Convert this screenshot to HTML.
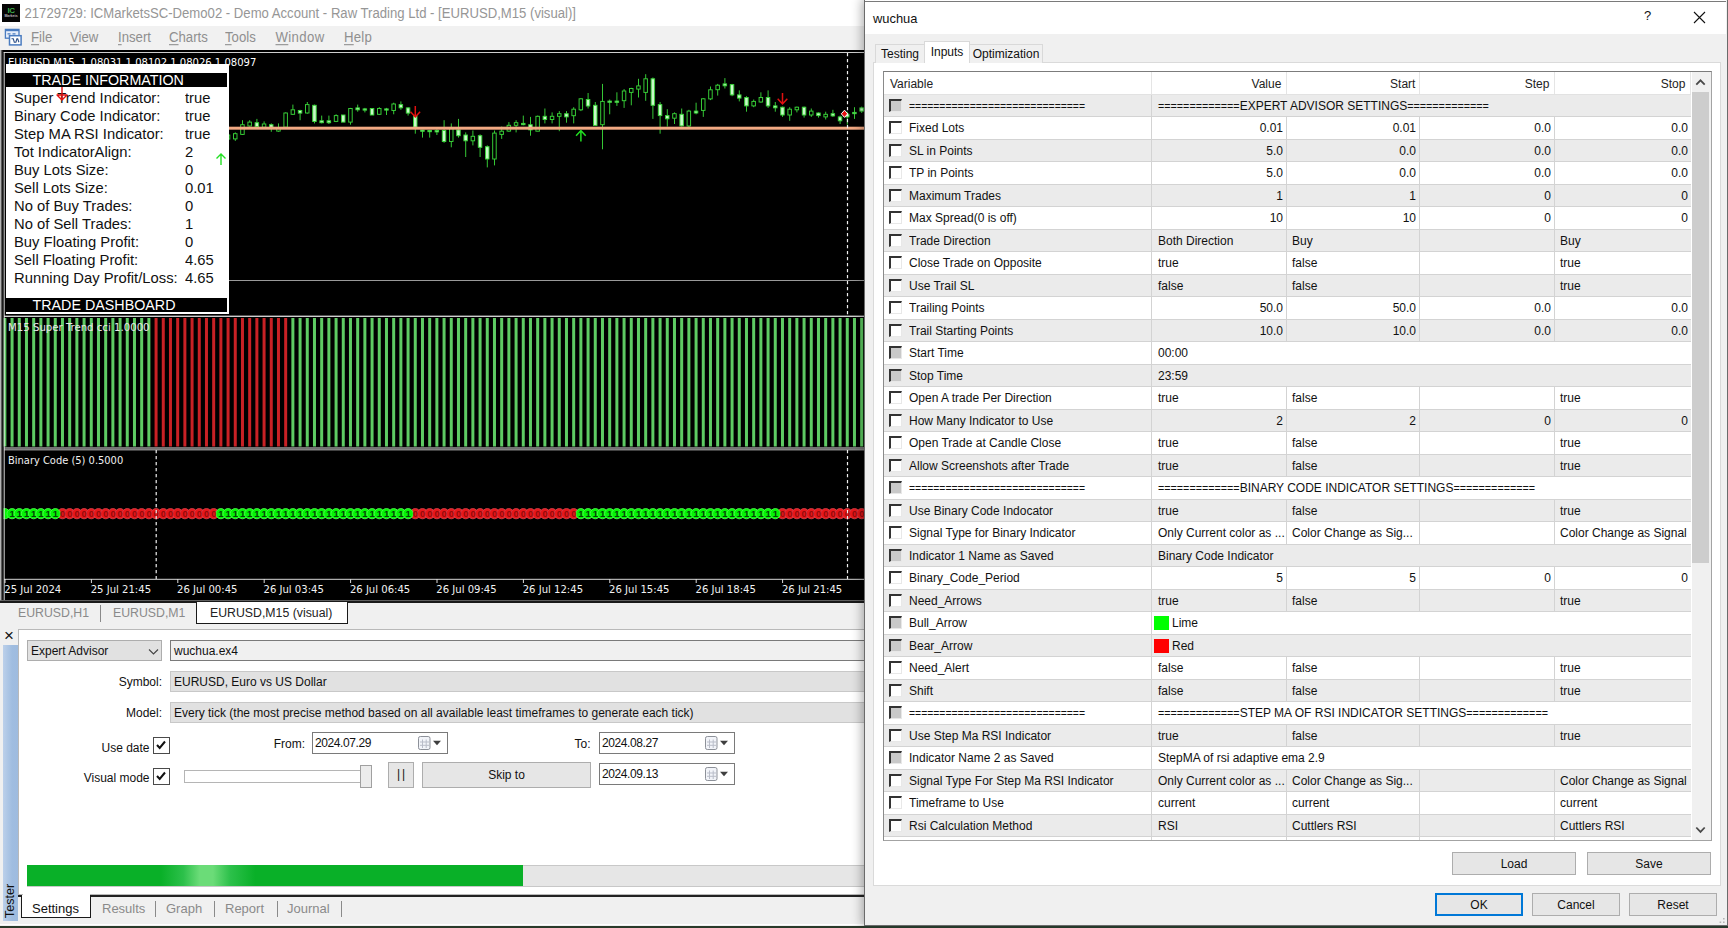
<!DOCTYPE html>
<html lang="en">
<head>
<meta charset="utf-8">
<title>wuchua - Strategy Tester</title>
<style>
*{box-sizing:border-box;margin:0;padding:0}
html,body{width:1728px;height:928px;overflow:hidden;background:#f0f0f0;font-family:"Liberation Sans",Arial,sans-serif;font-size:12px;color:#000}
.abs{position:absolute}
#main{position:absolute;left:0;top:0;width:866px;height:928px;background:#f0f0f0;overflow:hidden}
#titlebar{position:absolute;left:0;top:0;width:866px;height:26px;background:#fff}
#titlebar .logo{position:absolute;left:2px;top:3.500px;width:18px;height:18px;background:#050505;}
#titlebar .logo span{position:absolute;left:3px;top:3px;width:12px;text-align:center;font-size:8px;font-weight:bold;color:#3fae4a;letter-spacing:-0.5px;line-height:8px}
#titlebar .logo em{position:absolute;left:2px;top:10.500px;width:14px;text-align:center;font-style:normal;font-size:3.5px;line-height:4px;color:#bbb;font-weight:bold}
#titlebar .t{position:absolute;left:24.500px;top:4.700px;font-size:13.13px;line-height:17px;color:#969696;white-space:nowrap;transform:scaleY(1.1);transform-origin:0 78%}
#menubar{position:absolute;left:0;top:26px;width:866px;height:24px;background:#f1f1f1}
#menubar span{position:absolute;top:3px;font-size:13.2px;line-height:17px;color:#8f8f8f;white-space:nowrap;transform:scaleY(1.08);transform-origin:0 78%}
#menubar span u{text-decoration:underline;text-underline-offset:2px}
#chart{position:absolute;left:0;top:50px;width:866px;height:552px;background:#000}
#chart svg{position:absolute;left:0;top:-50px}
.clab{font-family:"DejaVu Sans Condensed","DejaVu Sans",sans-serif}
#info{position:absolute;left:6px;top:64px;width:223px;height:250px;background:#fff;overflow:hidden}
#info .hd{position:absolute;left:0;width:223px;height:14px;background:#000;color:#fff;font-size:14.3px;line-height:14px;padding-left:26.500px;white-space:nowrap;border-right:2px solid #fff}
#info .il,#info .iv{position:absolute;font-size:14.8px;line-height:18px;white-space:nowrap;color:#111;transform:scaleY(.93);transform-origin:0 75%}
#info .il{left:8px}
#info .iv{left:179px}
#ctabs{position:absolute;left:0;top:602px;width:866px;height:24px;background:#f0f0f0;font-size:12.3px}
#ctabs span{position:absolute;top:3px;line-height:17px;color:#8a8a8a;white-space:nowrap;transform:scaleY(1.1);transform-origin:0 70%}
#tester{position:absolute;left:0;top:626px;width:866px;height:302px;background:#f0f0f0}
#tpanel{position:absolute;left:18px;top:3px;width:860px;height:266px;background:#fff;border:1px solid #b9b9b9}
.lbl{position:absolute;white-space:nowrap;font-size:12px;line-height:15px;color:#111}
.box{position:absolute;border:1px solid #adadad;background:#e3e3e3;font-size:12px;line-height:20.500px;padding-left:3px;white-space:nowrap;color:#111;overflow:hidden}
.chk{position:absolute;width:16.500px;height:16.500px;border:1px solid #4a4a4a;background:#fff}
.btn{position:absolute;border:1px solid #adadad;background:#e6e6e6;text-align:center;font-size:12px;color:#111;white-space:nowrap}
#btabs{position:absolute;left:0;top:269px;width:866px;height:33px}
#btabs span{position:absolute;top:5px;font-size:13px;line-height:17px;color:#8a8a8a;white-space:nowrap}
/* dialog */
#dlg{position:absolute;left:864px;top:-1px;width:864px;height:927px;background:#f0f0f0;border:1px solid #6b6b6b;border-top-color:#8a8a8a;box-shadow:-2px 0 10px rgba(0,0,0,.32)}
#dtitle{position:absolute;left:0;top:0;width:861px;height:34px;background:#fff}
#dtitle .t{position:absolute;left:8px;top:10.500px;font-size:12.9px;line-height:16px;color:#111}
#pane{position:absolute;left:8px;top:62px;width:847.500px;height:824px;background:#fff;border:1px solid #dadada}
.dtab{position:absolute;border:1px solid #d9d9d9;border-bottom:none;background:#f0f0f0;font-size:12px;line-height:15px;text-align:center;white-space:nowrap;color:#111}
#list{position:absolute;left:18px;top:71px;width:829px;height:770px;border:1px solid;border-color:#7c7c7c #a3a3a3 #a3a3a3 #8a8a8a;background:#fff;overflow:hidden}
#lhead{position:absolute;left:0;top:0;width:807px;height:22.5px;background:#fff;border-bottom:1px solid #e2e2e2}
#lhead span{position:absolute;top:5px;font-size:12px;line-height:15px;color:#222;white-space:nowrap}
#lhead i{position:absolute;top:0;width:1px;height:22px;background:#e5e5e5}
#lbody{position:absolute;left:0;top:22.5px;width:807px}
.r{position:relative;height:22.5px;width:807px;border-bottom:1px solid #d3d3d3;font-size:12px;line-height:23.500px;white-space:nowrap;color:#111}
.r.g{background:#ebebeb}
.r span{position:absolute;top:0;height:21.5px;overflow:hidden}
.r b{font-weight:normal}
.r .c0{left:25px;width:240px}
.r .c1{left:267px;width:135px;border-left:1px solid #d3d3d3;padding-left:6px}
.r .c2{left:402px;width:133px;border-left:1px solid #d3d3d3;padding-left:5px}
.r .c3{left:535px;width:135px;border-left:1px solid #d3d3d3;padding-left:5px}
.r .c4{left:670px;width:137px;border-left:1px solid #d3d3d3;padding-left:5px}
.r .n{text-align:right;padding-right:3px;padding-left:0}
.q{font-size:10.4px}
.q2{font-size:10.75px}
.r .cs{left:267px;width:540px;border-left:1px solid #d3d3d3;padding-left:6px}
.cb{position:absolute;left:5px;top:4px;width:13px;height:13px;background:#fff;border-top:2px solid #333;border-left:2px solid #333;border-right:1px solid #e8e8e8;border-bottom:1px solid #e8e8e8}
.cb.dis{background:#c9c9c9}
.sw{display:inline-block;width:15px;height:14px;vertical-align:-3px;margin-right:3px;margin-left:-4px}
</style>
</head>
<body>
<div id="main">
  <div id="titlebar">
    <div class="logo"><span>IC</span><em>Markets</em></div>
    <div class="t">21729729: ICMarketsSC-Demo02 - Demo Account - Raw Trading Ltd - [EURUSD,M15 (visual)]</div>
  </div>
  <div id="menubar">
    <svg class="abs" style="left:4px;top:1px" width="20" height="20" viewBox="0 0 20 20"><rect x="1.4" y="2.4" width="13.6" height="8.8" fill="#e6eefa" stroke="#4a7cc0" stroke-width="1.3"/><rect x="1.4" y="2" width="13.6" height="2.200" fill="#4a7cc0"/><path d="M3.500 6.800 h3 M8.500 6.800 h3" stroke="#4a7cc0" stroke-width="1.200"/><rect x="5.500" y="8.700" width="11.600" height="9.200" fill="#fff" stroke="#4a7cc0" stroke-width="1.500"/><path d="M7.500 11.800 h1.800 l1 3.400 h1.600 l1 -3.400 h0.800 l1.200 3.400" stroke="#2d4f86" stroke-width="1.100" fill="none"/></svg>
    <span style="left:31px"><u>F</u>ile</span>
    <span style="left:70px"><u>V</u>iew</span>
    <span style="left:118px"><u>I</u>nsert</span>
    <span style="left:169px"><u>C</u>harts</span>
    <span style="left:225px"><u>T</u>ools</span>
    <span style="left:275.500px;letter-spacing:.35px"><u>W</u>indow</span>
    <span style="left:344px;letter-spacing:.2px"><u>H</u>elp</span>
  </div>
  <div id="chart">
    <svg width="866" height="602" viewBox="0 0 866 602" shape-rendering="auto">
      <!-- frame -->
      <!-- price chart title -->
      <text class="clab" x="8" y="66" font-size="11.15" fill="#fff">EURUSD,M15&#160;&#160;1.08031 1.08102 1.08026 1.08097</text>
      <!-- horizontal grey line -->
      <rect x="229" y="280" width="637" height="1" fill="#9a9a9a"/>
      <!-- candles -->
      <g stroke="#38d238" stroke-width="0.95">
<line x1="228.1" y1="133.1" x2="228.1" y2="140.9"/>
<rect x="226.3" y="135.0" width="3.5" height="4.1" fill="#000"/>
<line x1="235.3" y1="132.4" x2="235.3" y2="140.9"/>
<rect x="233.5" y="133.7" width="3.5" height="5.2" fill="#000"/>
<line x1="242.5" y1="120.2" x2="242.5" y2="135.0"/>
<rect x="240.7" y="124.7" width="3.5" height="9.7" fill="#000"/>
<line x1="249.7" y1="120.2" x2="249.7" y2="126.6"/>
<rect x="247.9" y="122.1" width="3.5" height="3.9" fill="#000"/>
<line x1="256.9" y1="118.9" x2="256.9" y2="127.3"/>
<rect x="255.1" y="122.7" width="3.5" height="3.9" fill="#c8f9c8"/>
<line x1="264.1" y1="121.4" x2="264.1" y2="127.3"/>
<rect x="262.3" y="124.0" width="3.5" height="3.2" fill="#000"/>
<line x1="271.3" y1="123.4" x2="271.3" y2="131.8"/>
<rect x="269.5" y="124.7" width="3.5" height="2.6" fill="#c8f9c8"/>
<line x1="278.5" y1="123.4" x2="278.5" y2="131.8"/>
<rect x="276.7" y="127.9" width="3.5" height="3.2" fill="#000"/>
<line x1="285.7" y1="112.4" x2="285.7" y2="127.3"/>
<rect x="283.9" y="113.0" width="3.5" height="14.2" fill="#000"/>
<line x1="292.9" y1="104.6" x2="292.9" y2="115.0"/>
<rect x="291.1" y="109.8" width="3.5" height="4.5" fill="#000"/>
<line x1="300.1" y1="109.8" x2="300.1" y2="120.2"/>
<rect x="298.3" y="110.5" width="3.5" height="2.6" fill="#c8f9c8"/>
<line x1="307.3" y1="102.0" x2="307.3" y2="113.7"/>
<rect x="305.5" y="104.6" width="3.5" height="8.4" fill="#000"/>
<line x1="314.5" y1="104.6" x2="314.5" y2="123.4"/>
<rect x="312.7" y="105.3" width="3.5" height="16.2" fill="#c8f9c8"/>
<line x1="321.7" y1="115.6" x2="321.7" y2="123.4"/>
<rect x="319.9" y="120.8" width="3.5" height="1.9" fill="#c8f9c8"/>
<line x1="328.9" y1="115.6" x2="328.9" y2="124.0"/>
<rect x="327.1" y="120.8" width="3.5" height="1.9" fill="#c8f9c8"/>
<line x1="336.1" y1="114.3" x2="336.1" y2="122.1"/>
<rect x="334.3" y="115.6" width="3.5" height="5.8" fill="#000"/>
<line x1="343.3" y1="115.0" x2="343.3" y2="122.1"/>
<rect x="341.5" y="115.0" width="3.5" height="7.1" fill="#c8f9c8"/>
<line x1="350.5" y1="107.9" x2="350.5" y2="124.7"/>
<rect x="348.7" y="108.5" width="3.5" height="13.6" fill="#000"/>
<line x1="357.7" y1="104.6" x2="357.7" y2="111.7"/>
<rect x="355.9" y="107.9" width="3.5" height="1.9" fill="#c8f9c8"/>
<line x1="364.9" y1="107.9" x2="364.9" y2="112.4"/>
<rect x="363.1" y="108.9" width="3.5" height="1.2" fill="#c8f9c8"/>
<line x1="372.1" y1="108.5" x2="372.1" y2="115.0"/>
<rect x="370.3" y="108.5" width="3.5" height="6.5" fill="#c8f9c8"/>
<line x1="379.3" y1="107.2" x2="379.3" y2="115.0"/>
<rect x="377.5" y="108.5" width="3.5" height="5.8" fill="#000"/>
<line x1="386.5" y1="107.9" x2="386.5" y2="115.0"/>
<rect x="384.7" y="108.9" width="3.5" height="1.2" fill="#c8f9c8"/>
<line x1="393.7" y1="102.7" x2="393.7" y2="114.3"/>
<rect x="391.9" y="104.0" width="3.5" height="6.5" fill="#000"/>
<line x1="400.9" y1="101.4" x2="400.9" y2="109.8"/>
<rect x="399.1" y="104.6" width="3.5" height="3.2" fill="#c8f9c8"/>
<line x1="408.1" y1="107.2" x2="408.1" y2="115.6"/>
<rect x="406.3" y="107.9" width="3.5" height="5.2" fill="#c8f9c8"/>
<line x1="415.3" y1="114.3" x2="415.3" y2="133.7"/>
<rect x="413.5" y="115.6" width="3.5" height="11.6" fill="#c8f9c8"/>
<line x1="422.5" y1="129.9" x2="422.5" y2="137.6"/>
<rect x="420.7" y="130.1" width="3.5" height="1.2" fill="#c8f9c8"/>
<line x1="429.7" y1="129.9" x2="429.7" y2="137.6"/>
<rect x="427.9" y="130.5" width="3.5" height="1.2" fill="#c8f9c8"/>
<line x1="436.9" y1="129.2" x2="436.9" y2="135.0"/>
<rect x="435.1" y="130.5" width="3.5" height="1.4" fill="#c8f9c8"/>
<line x1="444.1" y1="120.2" x2="444.1" y2="142.8"/>
<rect x="442.3" y="130.5" width="3.5" height="11.0" fill="#c8f9c8"/>
<line x1="451.3" y1="123.4" x2="451.3" y2="147.3"/>
<rect x="449.5" y="128.6" width="3.5" height="12.9" fill="#000"/>
<line x1="458.5" y1="118.9" x2="458.5" y2="137.6"/>
<rect x="456.7" y="129.9" width="3.5" height="5.8" fill="#c8f9c8"/>
<line x1="465.7" y1="132.4" x2="465.7" y2="157.0"/>
<rect x="463.9" y="135.0" width="3.5" height="5.8" fill="#c8f9c8"/>
<line x1="472.9" y1="130.5" x2="472.9" y2="145.4"/>
<rect x="471.1" y="136.3" width="3.5" height="4.5" fill="#000"/>
<line x1="480.1" y1="134.4" x2="480.1" y2="157.0"/>
<rect x="478.3" y="135.7" width="3.5" height="11.6" fill="#c8f9c8"/>
<line x1="487.3" y1="145.4" x2="487.3" y2="167.4"/>
<rect x="485.5" y="146.7" width="3.5" height="12.3" fill="#c8f9c8"/>
<line x1="494.5" y1="130.5" x2="494.5" y2="165.4"/>
<rect x="492.7" y="133.1" width="3.5" height="25.9" fill="#000"/>
<line x1="501.7" y1="126.6" x2="501.7" y2="138.9"/>
<rect x="499.9" y="131.2" width="3.5" height="3.2" fill="#000"/>
<line x1="508.9" y1="122.1" x2="508.9" y2="131.8"/>
<rect x="507.1" y="125.3" width="3.5" height="5.8" fill="#000"/>
<line x1="516.1" y1="120.2" x2="516.1" y2="132.4"/>
<rect x="514.3" y="122.7" width="3.5" height="2.6" fill="#000"/>
<line x1="523.3" y1="115.6" x2="523.3" y2="125.3"/>
<rect x="521.5" y="123.4" width="3.5" height="1.3" fill="#c8f9c8"/>
<line x1="530.5" y1="116.9" x2="530.5" y2="135.7"/>
<rect x="528.7" y="124.7" width="3.5" height="5.2" fill="#c8f9c8"/>
<line x1="537.7" y1="115.6" x2="537.7" y2="131.2"/>
<rect x="535.9" y="116.3" width="3.5" height="14.9" fill="#000"/>
<line x1="544.9" y1="108.5" x2="544.9" y2="123.4"/>
<rect x="543.1" y="116.3" width="3.5" height="3.2" fill="#c8f9c8"/>
<line x1="552.1" y1="112.4" x2="552.1" y2="123.4"/>
<rect x="550.3" y="116.3" width="3.5" height="3.2" fill="#000"/>
<line x1="559.3" y1="111.1" x2="559.3" y2="131.2"/>
<rect x="557.5" y="113.7" width="3.5" height="2.6" fill="#000"/>
<line x1="566.5" y1="111.1" x2="566.5" y2="122.7"/>
<rect x="564.7" y="113.7" width="3.5" height="3.2" fill="#c8f9c8"/>
<line x1="573.7" y1="107.2" x2="573.7" y2="123.4"/>
<rect x="571.9" y="109.2" width="3.5" height="6.5" fill="#000"/>
<line x1="580.9" y1="98.2" x2="580.9" y2="111.1"/>
<rect x="579.1" y="98.8" width="3.5" height="11.0" fill="#000"/>
<line x1="588.1" y1="93.0" x2="588.1" y2="108.5"/>
<rect x="586.3" y="99.5" width="3.5" height="6.5" fill="#c8f9c8"/>
<line x1="595.3" y1="102.0" x2="595.3" y2="125.3"/>
<rect x="593.5" y="105.3" width="3.5" height="20.1" fill="#c8f9c8"/>
<line x1="602.5" y1="83.9" x2="602.5" y2="149.3"/>
<rect x="600.7" y="101.4" width="3.5" height="23.3" fill="#000"/>
<line x1="609.7" y1="99.5" x2="609.7" y2="114.3"/>
<rect x="607.9" y="101.1" width="3.5" height="1.2" fill="#c8f9c8"/>
<line x1="616.9" y1="92.3" x2="616.9" y2="105.9"/>
<rect x="615.1" y="101.1" width="3.5" height="1.2" fill="#c8f9c8"/>
<line x1="624.1" y1="89.1" x2="624.1" y2="107.9"/>
<rect x="622.3" y="91.0" width="3.5" height="9.7" fill="#000"/>
<line x1="631.3" y1="87.8" x2="631.3" y2="105.3"/>
<rect x="629.5" y="88.5" width="3.5" height="3.9" fill="#000"/>
<line x1="638.5" y1="78.8" x2="638.5" y2="97.5"/>
<rect x="636.7" y="85.9" width="3.5" height="3.2" fill="#000"/>
<line x1="645.7" y1="74.2" x2="645.7" y2="100.8"/>
<rect x="643.9" y="78.8" width="3.5" height="13.6" fill="#000"/>
<line x1="652.9" y1="77.5" x2="652.9" y2="118.9"/>
<rect x="651.1" y="78.8" width="3.5" height="26.5" fill="#c8f9c8"/>
<line x1="660.1" y1="102.0" x2="660.1" y2="133.7"/>
<rect x="658.3" y="104.6" width="3.5" height="11.0" fill="#c8f9c8"/>
<line x1="667.3" y1="109.2" x2="667.3" y2="126.6"/>
<rect x="665.5" y="115.6" width="3.5" height="3.2" fill="#c8f9c8"/>
<line x1="674.5" y1="112.4" x2="674.5" y2="124.0"/>
<rect x="672.7" y="113.7" width="3.5" height="4.5" fill="#000"/>
<line x1="681.7" y1="108.5" x2="681.7" y2="126.6"/>
<rect x="679.9" y="114.3" width="3.5" height="11.6" fill="#c8f9c8"/>
<line x1="688.9" y1="109.8" x2="688.9" y2="128.6"/>
<rect x="687.1" y="111.1" width="3.5" height="14.9" fill="#000"/>
<line x1="696.1" y1="102.7" x2="696.1" y2="114.3"/>
<rect x="694.3" y="111.1" width="3.5" height="1.9" fill="#c8f9c8"/>
<line x1="703.3" y1="98.2" x2="703.3" y2="116.9"/>
<rect x="701.5" y="98.8" width="3.5" height="11.6" fill="#000"/>
<line x1="710.5" y1="86.5" x2="710.5" y2="100.1"/>
<rect x="708.7" y="89.8" width="3.5" height="9.1" fill="#000"/>
<line x1="717.7" y1="83.9" x2="717.7" y2="95.6"/>
<rect x="715.9" y="85.2" width="3.5" height="4.5" fill="#000"/>
<line x1="724.9" y1="78.1" x2="724.9" y2="88.5"/>
<rect x="723.1" y="83.9" width="3.5" height="1.9" fill="#c8f9c8"/>
<line x1="732.1" y1="83.9" x2="732.1" y2="96.2"/>
<rect x="730.3" y="84.6" width="3.5" height="10.3" fill="#c8f9c8"/>
<line x1="739.3" y1="90.4" x2="739.3" y2="101.4"/>
<rect x="737.5" y="94.9" width="3.5" height="3.2" fill="#c8f9c8"/>
<line x1="746.5" y1="96.2" x2="746.5" y2="111.7"/>
<rect x="744.7" y="97.5" width="3.5" height="8.4" fill="#c8f9c8"/>
<line x1="753.7" y1="99.5" x2="753.7" y2="107.2"/>
<rect x="751.9" y="101.4" width="3.5" height="4.5" fill="#000"/>
<line x1="760.9" y1="92.3" x2="760.9" y2="102.7"/>
<rect x="759.1" y="97.5" width="3.5" height="4.5" fill="#000"/>
<line x1="768.1" y1="90.4" x2="768.1" y2="107.9"/>
<rect x="766.3" y="97.5" width="3.5" height="8.4" fill="#c8f9c8"/>
<line x1="775.3" y1="102.0" x2="775.3" y2="111.7"/>
<rect x="773.5" y="105.9" width="3.5" height="1.9" fill="#c8f9c8"/>
<line x1="782.5" y1="106.6" x2="782.5" y2="116.9"/>
<rect x="780.7" y="107.2" width="3.5" height="7.8" fill="#c8f9c8"/>
<line x1="789.7" y1="107.2" x2="789.7" y2="120.8"/>
<rect x="787.9" y="109.2" width="3.5" height="5.8" fill="#000"/>
<line x1="796.9" y1="106.6" x2="796.9" y2="112.4"/>
<rect x="795.1" y="107.2" width="3.5" height="2.6" fill="#000"/>
<line x1="804.1" y1="106.6" x2="804.1" y2="117.6"/>
<rect x="802.3" y="107.2" width="3.5" height="7.8" fill="#c8f9c8"/>
<line x1="811.3" y1="108.5" x2="811.3" y2="116.9"/>
<rect x="809.5" y="111.1" width="3.5" height="3.9" fill="#000"/>
<line x1="818.5" y1="112.4" x2="818.5" y2="117.6"/>
<rect x="816.7" y="113.0" width="3.5" height="2.6" fill="#c8f9c8"/>
<line x1="825.7" y1="111.7" x2="825.7" y2="119.5"/>
<rect x="823.9" y="114.3" width="3.5" height="2.6" fill="#000"/>
<line x1="832.9" y1="109.8" x2="832.9" y2="116.9"/>
<rect x="831.1" y="113.7" width="3.5" height="2.2" fill="#c8f9c8"/>
<line x1="840.1" y1="115.6" x2="840.1" y2="124.0"/>
<rect x="838.3" y="116.9" width="3.5" height="3.9" fill="#c8f9c8"/>
<line x1="847.3" y1="111.7" x2="847.3" y2="124.7"/>
<rect x="845.5" y="114.3" width="3.5" height="2.6" fill="#c8f9c8"/>
<line x1="854.5" y1="107.2" x2="854.5" y2="118.9"/>
<rect x="852.7" y="112.4" width="3.5" height="1.3" fill="#c8f9c8"/>
<line x1="861.7" y1="106.6" x2="861.7" y2="113.0"/>
<rect x="859.9" y="107.9" width="3.5" height="3.2" fill="#c8f9c8"/>
      </g>
      <!-- orange level -->
      <rect x="229" y="126.7" width="637" height="3" fill="#f2a983"/>
      <path d="M415.3 106.0 V117.0 M410.5 111.7 L415.3 117.0 L420.1 111.7" stroke="#e01010" stroke-width="1.5" fill="none"/><path d="M782.5 93.0 V104.0 M777.7 98.7 L782.5 104.0 L787.3 98.7" stroke="#e01010" stroke-width="1.5" fill="none"/><path d="M580.9 141.5 V130.5 M576.1 135.8 L580.9 130.5 L585.7 135.8" stroke="#22e022" stroke-width="1.5" fill="none"/>
      <!-- order marker -->
      <path d="M841.3 113.8 l3.2 -3.6 l3.2 3.6 l-3.2 3.600z" fill="#e81010" stroke="#fff" stroke-width="1"/>
      <!-- separators -->
      <rect x="4" y="315.6" width="862" height="1.4" fill="#cfcfcf"/>
      <rect x="4" y="447.4" width="862" height="1.2" fill="#bdbdbd"/>
      <rect x="4" y="449.4" width="862" height="0.9" fill="#d8d8d8"/>
      <!-- super trend bars -->
<rect x="3.37" y="318" width="3" height="128.5" fill="#5ecb63"/>
<rect x="10.57" y="318" width="3" height="128.5" fill="#5ecb63"/>
<rect x="17.77" y="318" width="3" height="128.5" fill="#5ecb63"/>
<rect x="24.97" y="318" width="3" height="128.5" fill="#5ecb63"/>
<rect x="32.17" y="318" width="3" height="128.5" fill="#5ecb63"/>
<rect x="39.37" y="318" width="3" height="128.5" fill="#5ecb63"/>
<rect x="46.57" y="318" width="3" height="128.5" fill="#5ecb63"/>
<rect x="53.77" y="318" width="3" height="128.5" fill="#5ecb63"/>
<rect x="60.97" y="318" width="3" height="128.5" fill="#5ecb63"/>
<rect x="68.17" y="318" width="3" height="128.5" fill="#5ecb63"/>
<rect x="75.37" y="318" width="3" height="128.5" fill="#5ecb63"/>
<rect x="82.57" y="318" width="3" height="128.5" fill="#5ecb63"/>
<rect x="89.77" y="318" width="3" height="128.5" fill="#5ecb63"/>
<rect x="96.97" y="318" width="3" height="128.5" fill="#5ecb63"/>
<rect x="104.17" y="318" width="3" height="128.5" fill="#5ecb63"/>
<rect x="111.37" y="318" width="3" height="128.5" fill="#5ecb63"/>
<rect x="118.57" y="318" width="3" height="128.5" fill="#5ecb63"/>
<rect x="125.77" y="318" width="3" height="128.5" fill="#5ecb63"/>
<rect x="132.97" y="318" width="3" height="128.5" fill="#5ecb63"/>
<rect x="140.17" y="318" width="3" height="128.5" fill="#5ecb63"/>
<rect x="147.37" y="318" width="3" height="128.5" fill="#5ecb63"/>
<rect x="154.57" y="318" width="3" height="128.5" fill="#c92125"/>
<rect x="161.77" y="318" width="3" height="128.5" fill="#c92125"/>
<rect x="168.97" y="318" width="3" height="128.5" fill="#c92125"/>
<rect x="176.17" y="318" width="3" height="128.5" fill="#c92125"/>
<rect x="183.37" y="318" width="3" height="128.5" fill="#c92125"/>
<rect x="190.57" y="318" width="3" height="128.5" fill="#c92125"/>
<rect x="197.77" y="318" width="3" height="128.5" fill="#c92125"/>
<rect x="204.97" y="318" width="3" height="128.5" fill="#c92125"/>
<rect x="212.17" y="318" width="3" height="128.5" fill="#c92125"/>
<rect x="219.37" y="318" width="3" height="128.5" fill="#c92125"/>
<rect x="226.57" y="318" width="3" height="128.5" fill="#c92125"/>
<rect x="233.77" y="318" width="3" height="128.5" fill="#c92125"/>
<rect x="240.97" y="318" width="3" height="128.5" fill="#c92125"/>
<rect x="248.17" y="318" width="3" height="128.5" fill="#c92125"/>
<rect x="255.37" y="318" width="3" height="128.5" fill="#c92125"/>
<rect x="262.57" y="318" width="3" height="128.5" fill="#c92125"/>
<rect x="269.77" y="318" width="3" height="128.5" fill="#c92125"/>
<rect x="276.97" y="318" width="3" height="128.5" fill="#c92125"/>
<rect x="284.17" y="318" width="3" height="128.5" fill="#c92125"/>
<rect x="291.37" y="318" width="3" height="128.5" fill="#5ecb63"/>
<rect x="298.57" y="318" width="3" height="128.5" fill="#5ecb63"/>
<rect x="305.77" y="318" width="3" height="128.5" fill="#5ecb63"/>
<rect x="312.97" y="318" width="3" height="128.5" fill="#5ecb63"/>
<rect x="320.17" y="318" width="3" height="128.5" fill="#5ecb63"/>
<rect x="327.37" y="318" width="3" height="128.5" fill="#5ecb63"/>
<rect x="334.57" y="318" width="3" height="128.5" fill="#5ecb63"/>
<rect x="341.77" y="318" width="3" height="128.5" fill="#5ecb63"/>
<rect x="348.97" y="318" width="3" height="128.5" fill="#5ecb63"/>
<rect x="356.17" y="318" width="3" height="128.5" fill="#5ecb63"/>
<rect x="363.37" y="318" width="3" height="128.5" fill="#5ecb63"/>
<rect x="370.57" y="318" width="3" height="128.5" fill="#5ecb63"/>
<rect x="377.77" y="318" width="3" height="128.5" fill="#5ecb63"/>
<rect x="384.97" y="318" width="3" height="128.5" fill="#5ecb63"/>
<rect x="392.17" y="318" width="3" height="128.5" fill="#5ecb63"/>
<rect x="399.37" y="318" width="3" height="128.5" fill="#5ecb63"/>
<rect x="406.57" y="318" width="3" height="128.5" fill="#5ecb63"/>
<rect x="413.77" y="318" width="3" height="128.5" fill="#5ecb63"/>
<rect x="420.97" y="318" width="3" height="128.5" fill="#5ecb63"/>
<rect x="428.17" y="318" width="3" height="128.5" fill="#5ecb63"/>
<rect x="435.37" y="318" width="3" height="128.5" fill="#5ecb63"/>
<rect x="442.57" y="318" width="3" height="128.5" fill="#5ecb63"/>
<rect x="449.77" y="318" width="3" height="128.5" fill="#5ecb63"/>
<rect x="456.97" y="318" width="3" height="128.5" fill="#5ecb63"/>
<rect x="464.17" y="318" width="3" height="128.5" fill="#5ecb63"/>
<rect x="471.37" y="318" width="3" height="128.5" fill="#5ecb63"/>
<rect x="478.57" y="318" width="3" height="128.5" fill="#5ecb63"/>
<rect x="485.77" y="318" width="3" height="128.5" fill="#5ecb63"/>
<rect x="492.97" y="318" width="3" height="128.5" fill="#5ecb63"/>
<rect x="500.17" y="318" width="3" height="128.5" fill="#5ecb63"/>
<rect x="507.37" y="318" width="3" height="128.5" fill="#5ecb63"/>
<rect x="514.57" y="318" width="3" height="128.5" fill="#5ecb63"/>
<rect x="521.77" y="318" width="3" height="128.5" fill="#5ecb63"/>
<rect x="528.97" y="318" width="3" height="128.5" fill="#5ecb63"/>
<rect x="536.17" y="318" width="3" height="128.5" fill="#5ecb63"/>
<rect x="543.37" y="318" width="3" height="128.5" fill="#5ecb63"/>
<rect x="550.57" y="318" width="3" height="128.5" fill="#5ecb63"/>
<rect x="557.77" y="318" width="3" height="128.5" fill="#5ecb63"/>
<rect x="564.97" y="318" width="3" height="128.5" fill="#5ecb63"/>
<rect x="572.17" y="318" width="3" height="128.5" fill="#5ecb63"/>
<rect x="579.37" y="318" width="3" height="128.5" fill="#5ecb63"/>
<rect x="586.57" y="318" width="3" height="128.5" fill="#5ecb63"/>
<rect x="593.77" y="318" width="3" height="128.5" fill="#5ecb63"/>
<rect x="600.97" y="318" width="3" height="128.5" fill="#5ecb63"/>
<rect x="608.17" y="318" width="3" height="128.5" fill="#5ecb63"/>
<rect x="615.37" y="318" width="3" height="128.5" fill="#5ecb63"/>
<rect x="622.57" y="318" width="3" height="128.5" fill="#5ecb63"/>
<rect x="629.77" y="318" width="3" height="128.5" fill="#5ecb63"/>
<rect x="636.97" y="318" width="3" height="128.5" fill="#5ecb63"/>
<rect x="644.17" y="318" width="3" height="128.5" fill="#5ecb63"/>
<rect x="651.37" y="318" width="3" height="128.5" fill="#5ecb63"/>
<rect x="658.57" y="318" width="3" height="128.5" fill="#5ecb63"/>
<rect x="665.77" y="318" width="3" height="128.5" fill="#5ecb63"/>
<rect x="672.97" y="318" width="3" height="128.5" fill="#5ecb63"/>
<rect x="680.17" y="318" width="3" height="128.5" fill="#5ecb63"/>
<rect x="687.37" y="318" width="3" height="128.5" fill="#5ecb63"/>
<rect x="694.57" y="318" width="3" height="128.5" fill="#5ecb63"/>
<rect x="701.77" y="318" width="3" height="128.5" fill="#5ecb63"/>
<rect x="708.97" y="318" width="3" height="128.5" fill="#5ecb63"/>
<rect x="716.17" y="318" width="3" height="128.5" fill="#5ecb63"/>
<rect x="723.37" y="318" width="3" height="128.5" fill="#5ecb63"/>
<rect x="730.57" y="318" width="3" height="128.5" fill="#5ecb63"/>
<rect x="737.77" y="318" width="3" height="128.5" fill="#5ecb63"/>
<rect x="744.97" y="318" width="3" height="128.5" fill="#5ecb63"/>
<rect x="752.17" y="318" width="3" height="128.5" fill="#5ecb63"/>
<rect x="759.37" y="318" width="3" height="128.5" fill="#5ecb63"/>
<rect x="766.57" y="318" width="3" height="128.5" fill="#5ecb63"/>
<rect x="773.77" y="318" width="3" height="128.5" fill="#5ecb63"/>
<rect x="780.97" y="318" width="3" height="128.5" fill="#5ecb63"/>
<rect x="788.17" y="318" width="3" height="128.5" fill="#5ecb63"/>
<rect x="795.37" y="318" width="3" height="128.5" fill="#5ecb63"/>
<rect x="802.57" y="318" width="3" height="128.5" fill="#5ecb63"/>
<rect x="809.77" y="318" width="3" height="128.5" fill="#5ecb63"/>
<rect x="816.97" y="318" width="3" height="128.5" fill="#5ecb63"/>
<rect x="824.17" y="318" width="3" height="128.5" fill="#5ecb63"/>
<rect x="831.37" y="318" width="3" height="128.5" fill="#5ecb63"/>
<rect x="838.57" y="318" width="3" height="128.5" fill="#5ecb63"/>
<rect x="845.77" y="318" width="3" height="128.5" fill="#5ecb63"/>
<rect x="852.97" y="318" width="3" height="128.5" fill="#5ecb63"/>
<rect x="860.17" y="318" width="3" height="128.5" fill="#5ecb63"/>
      <text class="clab" x="8" y="331" font-size="11.3" fill="#e8e8e8">M15 Super Trend cci 1.0000</text>
      <!-- binary code -->
      <text class="clab" x="8" y="463.5" font-size="11" fill="#f0f0f0">Binary Code (5) 0.5000</text>
<circle cx="62.47" cy="513.7" r="5.1" fill="#e8171a" stroke="#d8404a" stroke-width="0.9"/>
<circle cx="69.67" cy="513.7" r="5.1" fill="#e8171a" stroke="#d8404a" stroke-width="0.9"/>
<circle cx="76.87" cy="513.7" r="5.1" fill="#e8171a" stroke="#d8404a" stroke-width="0.9"/>
<circle cx="84.07" cy="513.7" r="5.1" fill="#e8171a" stroke="#d8404a" stroke-width="0.9"/>
<circle cx="91.27" cy="513.7" r="5.1" fill="#e8171a" stroke="#d8404a" stroke-width="0.9"/>
<circle cx="98.47" cy="513.7" r="5.1" fill="#e8171a" stroke="#d8404a" stroke-width="0.9"/>
<circle cx="105.67" cy="513.7" r="5.1" fill="#e8171a" stroke="#d8404a" stroke-width="0.9"/>
<circle cx="112.87" cy="513.7" r="5.1" fill="#e8171a" stroke="#d8404a" stroke-width="0.9"/>
<circle cx="120.07" cy="513.7" r="5.1" fill="#e8171a" stroke="#d8404a" stroke-width="0.9"/>
<circle cx="127.27" cy="513.7" r="5.1" fill="#e8171a" stroke="#d8404a" stroke-width="0.9"/>
<circle cx="134.47" cy="513.7" r="5.1" fill="#e8171a" stroke="#d8404a" stroke-width="0.9"/>
<circle cx="141.67" cy="513.7" r="5.1" fill="#e8171a" stroke="#d8404a" stroke-width="0.9"/>
<circle cx="148.87" cy="513.7" r="5.1" fill="#e8171a" stroke="#d8404a" stroke-width="0.9"/>
<circle cx="156.07" cy="513.7" r="5.1" fill="#e8171a" stroke="#d8404a" stroke-width="0.9"/>
<circle cx="163.27" cy="513.7" r="5.1" fill="#e8171a" stroke="#d8404a" stroke-width="0.9"/>
<circle cx="170.47" cy="513.7" r="5.1" fill="#e8171a" stroke="#d8404a" stroke-width="0.9"/>
<circle cx="177.67" cy="513.7" r="5.1" fill="#e8171a" stroke="#d8404a" stroke-width="0.9"/>
<circle cx="184.87" cy="513.7" r="5.1" fill="#e8171a" stroke="#d8404a" stroke-width="0.9"/>
<circle cx="192.07" cy="513.7" r="5.1" fill="#e8171a" stroke="#d8404a" stroke-width="0.9"/>
<circle cx="199.27" cy="513.7" r="5.1" fill="#e8171a" stroke="#d8404a" stroke-width="0.9"/>
<circle cx="206.47" cy="513.7" r="5.1" fill="#e8171a" stroke="#d8404a" stroke-width="0.9"/>
<circle cx="213.67" cy="513.7" r="5.1" fill="#e8171a" stroke="#d8404a" stroke-width="0.9"/>
<circle cx="415.27" cy="513.7" r="5.1" fill="#e8171a" stroke="#d8404a" stroke-width="0.9"/>
<circle cx="422.47" cy="513.7" r="5.1" fill="#e8171a" stroke="#d8404a" stroke-width="0.9"/>
<circle cx="429.67" cy="513.7" r="5.1" fill="#e8171a" stroke="#d8404a" stroke-width="0.9"/>
<circle cx="436.87" cy="513.7" r="5.1" fill="#e8171a" stroke="#d8404a" stroke-width="0.9"/>
<circle cx="444.07" cy="513.7" r="5.1" fill="#e8171a" stroke="#d8404a" stroke-width="0.9"/>
<circle cx="451.27" cy="513.7" r="5.1" fill="#e8171a" stroke="#d8404a" stroke-width="0.9"/>
<circle cx="458.47" cy="513.7" r="5.1" fill="#e8171a" stroke="#d8404a" stroke-width="0.9"/>
<circle cx="465.67" cy="513.7" r="5.1" fill="#e8171a" stroke="#d8404a" stroke-width="0.9"/>
<circle cx="472.87" cy="513.7" r="5.1" fill="#e8171a" stroke="#d8404a" stroke-width="0.9"/>
<circle cx="480.07" cy="513.7" r="5.1" fill="#e8171a" stroke="#d8404a" stroke-width="0.9"/>
<circle cx="487.27" cy="513.7" r="5.1" fill="#e8171a" stroke="#d8404a" stroke-width="0.9"/>
<circle cx="494.47" cy="513.7" r="5.1" fill="#e8171a" stroke="#d8404a" stroke-width="0.9"/>
<circle cx="501.67" cy="513.7" r="5.1" fill="#e8171a" stroke="#d8404a" stroke-width="0.9"/>
<circle cx="508.87" cy="513.7" r="5.1" fill="#e8171a" stroke="#d8404a" stroke-width="0.9"/>
<circle cx="516.07" cy="513.7" r="5.1" fill="#e8171a" stroke="#d8404a" stroke-width="0.9"/>
<circle cx="523.27" cy="513.7" r="5.1" fill="#e8171a" stroke="#d8404a" stroke-width="0.9"/>
<circle cx="530.47" cy="513.7" r="5.1" fill="#e8171a" stroke="#d8404a" stroke-width="0.9"/>
<circle cx="537.67" cy="513.7" r="5.1" fill="#e8171a" stroke="#d8404a" stroke-width="0.9"/>
<circle cx="544.87" cy="513.7" r="5.1" fill="#e8171a" stroke="#d8404a" stroke-width="0.9"/>
<circle cx="552.07" cy="513.7" r="5.1" fill="#e8171a" stroke="#d8404a" stroke-width="0.9"/>
<circle cx="559.27" cy="513.7" r="5.1" fill="#e8171a" stroke="#d8404a" stroke-width="0.9"/>
<circle cx="566.47" cy="513.7" r="5.1" fill="#e8171a" stroke="#d8404a" stroke-width="0.9"/>
<circle cx="573.67" cy="513.7" r="5.1" fill="#e8171a" stroke="#d8404a" stroke-width="0.9"/>
<circle cx="782.47" cy="513.7" r="5.1" fill="#e8171a" stroke="#d8404a" stroke-width="0.9"/>
<circle cx="789.67" cy="513.7" r="5.1" fill="#e8171a" stroke="#d8404a" stroke-width="0.9"/>
<circle cx="796.87" cy="513.7" r="5.1" fill="#e8171a" stroke="#d8404a" stroke-width="0.9"/>
<circle cx="804.07" cy="513.7" r="5.1" fill="#e8171a" stroke="#d8404a" stroke-width="0.9"/>
<circle cx="811.27" cy="513.7" r="5.1" fill="#e8171a" stroke="#d8404a" stroke-width="0.9"/>
<circle cx="818.47" cy="513.7" r="5.1" fill="#e8171a" stroke="#d8404a" stroke-width="0.9"/>
<circle cx="825.67" cy="513.7" r="5.1" fill="#e8171a" stroke="#d8404a" stroke-width="0.9"/>
<circle cx="832.87" cy="513.7" r="5.1" fill="#e8171a" stroke="#d8404a" stroke-width="0.9"/>
<circle cx="840.07" cy="513.7" r="5.1" fill="#e8171a" stroke="#d8404a" stroke-width="0.9"/>
<circle cx="847.27" cy="513.7" r="5.1" fill="#e8171a" stroke="#d8404a" stroke-width="0.9"/>
<circle cx="854.47" cy="513.7" r="5.1" fill="#e8171a" stroke="#d8404a" stroke-width="0.9"/>
<circle cx="861.67" cy="513.7" r="5.1" fill="#e8171a" stroke="#d8404a" stroke-width="0.9"/>
<circle cx="4.87" cy="513.7" r="5.1" fill="#04f604" stroke="#4dfa4d" stroke-width="0.9"/>
<circle cx="12.07" cy="513.7" r="5.1" fill="#04f604" stroke="#4dfa4d" stroke-width="0.9"/>
<circle cx="19.27" cy="513.7" r="5.1" fill="#04f604" stroke="#4dfa4d" stroke-width="0.9"/>
<circle cx="26.47" cy="513.7" r="5.1" fill="#04f604" stroke="#4dfa4d" stroke-width="0.9"/>
<circle cx="33.67" cy="513.7" r="5.1" fill="#04f604" stroke="#4dfa4d" stroke-width="0.9"/>
<circle cx="40.87" cy="513.7" r="5.1" fill="#04f604" stroke="#4dfa4d" stroke-width="0.9"/>
<circle cx="48.07" cy="513.7" r="5.1" fill="#04f604" stroke="#4dfa4d" stroke-width="0.9"/>
<circle cx="55.27" cy="513.7" r="5.1" fill="#04f604" stroke="#4dfa4d" stroke-width="0.9"/>
<circle cx="220.87" cy="513.7" r="5.1" fill="#04f604" stroke="#4dfa4d" stroke-width="0.9"/>
<circle cx="228.07" cy="513.7" r="5.1" fill="#04f604" stroke="#4dfa4d" stroke-width="0.9"/>
<circle cx="235.27" cy="513.7" r="5.1" fill="#04f604" stroke="#4dfa4d" stroke-width="0.9"/>
<circle cx="242.47" cy="513.7" r="5.1" fill="#04f604" stroke="#4dfa4d" stroke-width="0.9"/>
<circle cx="249.67" cy="513.7" r="5.1" fill="#04f604" stroke="#4dfa4d" stroke-width="0.9"/>
<circle cx="256.87" cy="513.7" r="5.1" fill="#04f604" stroke="#4dfa4d" stroke-width="0.9"/>
<circle cx="264.07" cy="513.7" r="5.1" fill="#04f604" stroke="#4dfa4d" stroke-width="0.9"/>
<circle cx="271.27" cy="513.7" r="5.1" fill="#04f604" stroke="#4dfa4d" stroke-width="0.9"/>
<circle cx="278.47" cy="513.7" r="5.1" fill="#04f604" stroke="#4dfa4d" stroke-width="0.9"/>
<circle cx="285.67" cy="513.7" r="5.1" fill="#04f604" stroke="#4dfa4d" stroke-width="0.9"/>
<circle cx="292.87" cy="513.7" r="5.1" fill="#04f604" stroke="#4dfa4d" stroke-width="0.9"/>
<circle cx="300.07" cy="513.7" r="5.1" fill="#04f604" stroke="#4dfa4d" stroke-width="0.9"/>
<circle cx="307.27" cy="513.7" r="5.1" fill="#04f604" stroke="#4dfa4d" stroke-width="0.9"/>
<circle cx="314.47" cy="513.7" r="5.1" fill="#04f604" stroke="#4dfa4d" stroke-width="0.9"/>
<circle cx="321.67" cy="513.7" r="5.1" fill="#04f604" stroke="#4dfa4d" stroke-width="0.9"/>
<circle cx="328.87" cy="513.7" r="5.1" fill="#04f604" stroke="#4dfa4d" stroke-width="0.9"/>
<circle cx="336.07" cy="513.7" r="5.1" fill="#04f604" stroke="#4dfa4d" stroke-width="0.9"/>
<circle cx="343.27" cy="513.7" r="5.1" fill="#04f604" stroke="#4dfa4d" stroke-width="0.9"/>
<circle cx="350.47" cy="513.7" r="5.1" fill="#04f604" stroke="#4dfa4d" stroke-width="0.9"/>
<circle cx="357.67" cy="513.7" r="5.1" fill="#04f604" stroke="#4dfa4d" stroke-width="0.9"/>
<circle cx="364.87" cy="513.7" r="5.1" fill="#04f604" stroke="#4dfa4d" stroke-width="0.9"/>
<circle cx="372.07" cy="513.7" r="5.1" fill="#04f604" stroke="#4dfa4d" stroke-width="0.9"/>
<circle cx="379.27" cy="513.7" r="5.1" fill="#04f604" stroke="#4dfa4d" stroke-width="0.9"/>
<circle cx="386.47" cy="513.7" r="5.1" fill="#04f604" stroke="#4dfa4d" stroke-width="0.9"/>
<circle cx="393.67" cy="513.7" r="5.1" fill="#04f604" stroke="#4dfa4d" stroke-width="0.9"/>
<circle cx="400.87" cy="513.7" r="5.1" fill="#04f604" stroke="#4dfa4d" stroke-width="0.9"/>
<circle cx="408.07" cy="513.7" r="5.1" fill="#04f604" stroke="#4dfa4d" stroke-width="0.9"/>
<circle cx="580.87" cy="513.7" r="5.1" fill="#04f604" stroke="#4dfa4d" stroke-width="0.9"/>
<circle cx="588.07" cy="513.7" r="5.1" fill="#04f604" stroke="#4dfa4d" stroke-width="0.9"/>
<circle cx="595.27" cy="513.7" r="5.1" fill="#04f604" stroke="#4dfa4d" stroke-width="0.9"/>
<circle cx="602.47" cy="513.7" r="5.1" fill="#04f604" stroke="#4dfa4d" stroke-width="0.9"/>
<circle cx="609.67" cy="513.7" r="5.1" fill="#04f604" stroke="#4dfa4d" stroke-width="0.9"/>
<circle cx="616.87" cy="513.7" r="5.1" fill="#04f604" stroke="#4dfa4d" stroke-width="0.9"/>
<circle cx="624.07" cy="513.7" r="5.1" fill="#04f604" stroke="#4dfa4d" stroke-width="0.9"/>
<circle cx="631.27" cy="513.7" r="5.1" fill="#04f604" stroke="#4dfa4d" stroke-width="0.9"/>
<circle cx="638.47" cy="513.7" r="5.1" fill="#04f604" stroke="#4dfa4d" stroke-width="0.9"/>
<circle cx="645.67" cy="513.7" r="5.1" fill="#04f604" stroke="#4dfa4d" stroke-width="0.9"/>
<circle cx="652.87" cy="513.7" r="5.1" fill="#04f604" stroke="#4dfa4d" stroke-width="0.9"/>
<circle cx="660.07" cy="513.7" r="5.1" fill="#04f604" stroke="#4dfa4d" stroke-width="0.9"/>
<circle cx="667.27" cy="513.7" r="5.1" fill="#04f604" stroke="#4dfa4d" stroke-width="0.9"/>
<circle cx="674.47" cy="513.7" r="5.1" fill="#04f604" stroke="#4dfa4d" stroke-width="0.9"/>
<circle cx="681.67" cy="513.7" r="5.1" fill="#04f604" stroke="#4dfa4d" stroke-width="0.9"/>
<circle cx="688.87" cy="513.7" r="5.1" fill="#04f604" stroke="#4dfa4d" stroke-width="0.9"/>
<circle cx="696.07" cy="513.7" r="5.1" fill="#04f604" stroke="#4dfa4d" stroke-width="0.9"/>
<circle cx="703.27" cy="513.7" r="5.1" fill="#04f604" stroke="#4dfa4d" stroke-width="0.9"/>
<circle cx="710.47" cy="513.7" r="5.1" fill="#04f604" stroke="#4dfa4d" stroke-width="0.9"/>
<circle cx="717.67" cy="513.7" r="5.1" fill="#04f604" stroke="#4dfa4d" stroke-width="0.9"/>
<circle cx="724.87" cy="513.7" r="5.1" fill="#04f604" stroke="#4dfa4d" stroke-width="0.9"/>
<circle cx="732.07" cy="513.7" r="5.1" fill="#04f604" stroke="#4dfa4d" stroke-width="0.9"/>
<circle cx="739.27" cy="513.7" r="5.1" fill="#04f604" stroke="#4dfa4d" stroke-width="0.9"/>
<circle cx="746.47" cy="513.7" r="5.1" fill="#04f604" stroke="#4dfa4d" stroke-width="0.9"/>
<circle cx="753.67" cy="513.7" r="5.1" fill="#04f604" stroke="#4dfa4d" stroke-width="0.9"/>
<circle cx="760.87" cy="513.7" r="5.1" fill="#04f604" stroke="#4dfa4d" stroke-width="0.9"/>
<circle cx="768.07" cy="513.7" r="5.1" fill="#04f604" stroke="#4dfa4d" stroke-width="0.9"/>
<circle cx="775.27" cy="513.7" r="5.1" fill="#04f604" stroke="#4dfa4d" stroke-width="0.9"/>
<g font-family="'Liberation Sans',sans-serif" text-anchor="middle"><text x="12.17" y="517.2" fill="#063f06" font-weight="bold" font-size="9.5">1</text>
<text x="19.37" y="517.2" fill="#063f06" font-weight="bold" font-size="9.5">1</text>
<text x="26.57" y="517.2" fill="#063f06" font-weight="bold" font-size="9.5">1</text>
<text x="33.77" y="517.2" fill="#063f06" font-weight="bold" font-size="9.5">1</text>
<text x="40.97" y="517.2" fill="#063f06" font-weight="bold" font-size="9.5">1</text>
<text x="48.17" y="517.2" fill="#063f06" font-weight="bold" font-size="9.5">1</text>
<text x="55.37" y="517.2" fill="#063f06" font-weight="bold" font-size="9.5">1</text>
<text x="62.57" y="517.2" fill="#930b0b" font-weight="bold" font-size="9.2">0</text>
<text x="69.77" y="517.2" fill="#930b0b" font-weight="bold" font-size="9.2">0</text>
<text x="76.97" y="517.2" fill="#930b0b" font-weight="bold" font-size="9.2">0</text>
<text x="84.17" y="517.2" fill="#930b0b" font-weight="bold" font-size="9.2">0</text>
<text x="91.37" y="517.2" fill="#930b0b" font-weight="bold" font-size="9.2">0</text>
<text x="98.57" y="517.2" fill="#930b0b" font-weight="bold" font-size="9.2">0</text>
<text x="105.77" y="517.2" fill="#930b0b" font-weight="bold" font-size="9.2">0</text>
<text x="112.97" y="517.2" fill="#930b0b" font-weight="bold" font-size="9.2">0</text>
<text x="120.17" y="517.2" fill="#930b0b" font-weight="bold" font-size="9.2">0</text>
<text x="127.37" y="517.2" fill="#930b0b" font-weight="bold" font-size="9.2">0</text>
<text x="134.57" y="517.2" fill="#930b0b" font-weight="bold" font-size="9.2">0</text>
<text x="141.77" y="517.2" fill="#930b0b" font-weight="bold" font-size="9.2">0</text>
<text x="148.97" y="517.2" fill="#930b0b" font-weight="bold" font-size="9.2">0</text>
<text x="156.17" y="517.2" fill="#930b0b" font-weight="bold" font-size="9.2">0</text>
<text x="163.37" y="517.2" fill="#930b0b" font-weight="bold" font-size="9.2">0</text>
<text x="170.57" y="517.2" fill="#930b0b" font-weight="bold" font-size="9.2">0</text>
<text x="177.77" y="517.2" fill="#930b0b" font-weight="bold" font-size="9.2">0</text>
<text x="184.97" y="517.2" fill="#930b0b" font-weight="bold" font-size="9.2">0</text>
<text x="192.17" y="517.2" fill="#930b0b" font-weight="bold" font-size="9.2">0</text>
<text x="199.37" y="517.2" fill="#930b0b" font-weight="bold" font-size="9.2">0</text>
<text x="206.57" y="517.2" fill="#930b0b" font-weight="bold" font-size="9.2">0</text>
<text x="213.77" y="517.2" fill="#930b0b" font-weight="bold" font-size="9.2">0</text>
<text x="220.97" y="517.2" fill="#063f06" font-weight="bold" font-size="9.5">1</text>
<text x="228.17" y="517.2" fill="#063f06" font-weight="bold" font-size="9.5">1</text>
<text x="235.37" y="517.2" fill="#063f06" font-weight="bold" font-size="9.5">1</text>
<text x="242.57" y="517.2" fill="#063f06" font-weight="bold" font-size="9.5">1</text>
<text x="249.77" y="517.2" fill="#063f06" font-weight="bold" font-size="9.5">1</text>
<text x="256.97" y="517.2" fill="#063f06" font-weight="bold" font-size="9.5">1</text>
<text x="264.17" y="517.2" fill="#063f06" font-weight="bold" font-size="9.5">1</text>
<text x="271.37" y="517.2" fill="#063f06" font-weight="bold" font-size="9.5">1</text>
<text x="278.57" y="517.2" fill="#063f06" font-weight="bold" font-size="9.5">1</text>
<text x="285.77" y="517.2" fill="#063f06" font-weight="bold" font-size="9.5">1</text>
<text x="292.97" y="517.2" fill="#063f06" font-weight="bold" font-size="9.5">1</text>
<text x="300.17" y="517.2" fill="#063f06" font-weight="bold" font-size="9.5">1</text>
<text x="307.37" y="517.2" fill="#063f06" font-weight="bold" font-size="9.5">1</text>
<text x="314.57" y="517.2" fill="#063f06" font-weight="bold" font-size="9.5">1</text>
<text x="321.77" y="517.2" fill="#063f06" font-weight="bold" font-size="9.5">1</text>
<text x="328.97" y="517.2" fill="#063f06" font-weight="bold" font-size="9.5">1</text>
<text x="336.17" y="517.2" fill="#063f06" font-weight="bold" font-size="9.5">1</text>
<text x="343.37" y="517.2" fill="#063f06" font-weight="bold" font-size="9.5">1</text>
<text x="350.57" y="517.2" fill="#063f06" font-weight="bold" font-size="9.5">1</text>
<text x="357.77" y="517.2" fill="#063f06" font-weight="bold" font-size="9.5">1</text>
<text x="364.97" y="517.2" fill="#063f06" font-weight="bold" font-size="9.5">1</text>
<text x="372.17" y="517.2" fill="#063f06" font-weight="bold" font-size="9.5">1</text>
<text x="379.37" y="517.2" fill="#063f06" font-weight="bold" font-size="9.5">1</text>
<text x="386.57" y="517.2" fill="#063f06" font-weight="bold" font-size="9.5">1</text>
<text x="393.77" y="517.2" fill="#063f06" font-weight="bold" font-size="9.5">1</text>
<text x="400.97" y="517.2" fill="#063f06" font-weight="bold" font-size="9.5">1</text>
<text x="408.17" y="517.2" fill="#063f06" font-weight="bold" font-size="9.5">1</text>
<text x="415.37" y="517.2" fill="#930b0b" font-weight="bold" font-size="9.2">0</text>
<text x="422.57" y="517.2" fill="#930b0b" font-weight="bold" font-size="9.2">0</text>
<text x="429.77" y="517.2" fill="#930b0b" font-weight="bold" font-size="9.2">0</text>
<text x="436.97" y="517.2" fill="#930b0b" font-weight="bold" font-size="9.2">0</text>
<text x="444.17" y="517.2" fill="#930b0b" font-weight="bold" font-size="9.2">0</text>
<text x="451.37" y="517.2" fill="#930b0b" font-weight="bold" font-size="9.2">0</text>
<text x="458.57" y="517.2" fill="#930b0b" font-weight="bold" font-size="9.2">0</text>
<text x="465.77" y="517.2" fill="#930b0b" font-weight="bold" font-size="9.2">0</text>
<text x="472.97" y="517.2" fill="#930b0b" font-weight="bold" font-size="9.2">0</text>
<text x="480.17" y="517.2" fill="#930b0b" font-weight="bold" font-size="9.2">0</text>
<text x="487.37" y="517.2" fill="#930b0b" font-weight="bold" font-size="9.2">0</text>
<text x="494.57" y="517.2" fill="#930b0b" font-weight="bold" font-size="9.2">0</text>
<text x="501.77" y="517.2" fill="#930b0b" font-weight="bold" font-size="9.2">0</text>
<text x="508.97" y="517.2" fill="#930b0b" font-weight="bold" font-size="9.2">0</text>
<text x="516.17" y="517.2" fill="#930b0b" font-weight="bold" font-size="9.2">0</text>
<text x="523.37" y="517.2" fill="#930b0b" font-weight="bold" font-size="9.2">0</text>
<text x="530.57" y="517.2" fill="#930b0b" font-weight="bold" font-size="9.2">0</text>
<text x="537.77" y="517.2" fill="#930b0b" font-weight="bold" font-size="9.2">0</text>
<text x="544.97" y="517.2" fill="#930b0b" font-weight="bold" font-size="9.2">0</text>
<text x="552.17" y="517.2" fill="#930b0b" font-weight="bold" font-size="9.2">0</text>
<text x="559.37" y="517.2" fill="#930b0b" font-weight="bold" font-size="9.2">0</text>
<text x="566.57" y="517.2" fill="#930b0b" font-weight="bold" font-size="9.2">0</text>
<text x="573.77" y="517.2" fill="#930b0b" font-weight="bold" font-size="9.2">0</text>
<text x="580.97" y="517.2" fill="#063f06" font-weight="bold" font-size="9.5">1</text>
<text x="588.17" y="517.2" fill="#063f06" font-weight="bold" font-size="9.5">1</text>
<text x="595.37" y="517.2" fill="#063f06" font-weight="bold" font-size="9.5">1</text>
<text x="602.57" y="517.2" fill="#063f06" font-weight="bold" font-size="9.5">1</text>
<text x="609.77" y="517.2" fill="#063f06" font-weight="bold" font-size="9.5">1</text>
<text x="616.97" y="517.2" fill="#063f06" font-weight="bold" font-size="9.5">1</text>
<text x="624.17" y="517.2" fill="#063f06" font-weight="bold" font-size="9.5">1</text>
<text x="631.37" y="517.2" fill="#063f06" font-weight="bold" font-size="9.5">1</text>
<text x="638.57" y="517.2" fill="#063f06" font-weight="bold" font-size="9.5">1</text>
<text x="645.77" y="517.2" fill="#063f06" font-weight="bold" font-size="9.5">1</text>
<text x="652.97" y="517.2" fill="#063f06" font-weight="bold" font-size="9.5">1</text>
<text x="660.17" y="517.2" fill="#063f06" font-weight="bold" font-size="9.5">1</text>
<text x="667.37" y="517.2" fill="#063f06" font-weight="bold" font-size="9.5">1</text>
<text x="674.57" y="517.2" fill="#063f06" font-weight="bold" font-size="9.5">1</text>
<text x="681.77" y="517.2" fill="#063f06" font-weight="bold" font-size="9.5">1</text>
<text x="688.97" y="517.2" fill="#063f06" font-weight="bold" font-size="9.5">1</text>
<text x="696.17" y="517.2" fill="#063f06" font-weight="bold" font-size="9.5">1</text>
<text x="703.37" y="517.2" fill="#063f06" font-weight="bold" font-size="9.5">1</text>
<text x="710.57" y="517.2" fill="#063f06" font-weight="bold" font-size="9.5">1</text>
<text x="717.77" y="517.2" fill="#063f06" font-weight="bold" font-size="9.5">1</text>
<text x="724.97" y="517.2" fill="#063f06" font-weight="bold" font-size="9.5">1</text>
<text x="732.17" y="517.2" fill="#063f06" font-weight="bold" font-size="9.5">1</text>
<text x="739.37" y="517.2" fill="#063f06" font-weight="bold" font-size="9.5">1</text>
<text x="746.57" y="517.2" fill="#063f06" font-weight="bold" font-size="9.5">1</text>
<text x="753.77" y="517.2" fill="#063f06" font-weight="bold" font-size="9.5">1</text>
<text x="760.97" y="517.2" fill="#063f06" font-weight="bold" font-size="9.5">1</text>
<text x="768.17" y="517.2" fill="#063f06" font-weight="bold" font-size="9.5">1</text>
<text x="775.37" y="517.2" fill="#063f06" font-weight="bold" font-size="9.5">1</text>
<text x="782.57" y="517.2" fill="#930b0b" font-weight="bold" font-size="9.2">0</text>
<text x="789.77" y="517.2" fill="#930b0b" font-weight="bold" font-size="9.2">0</text>
<text x="796.97" y="517.2" fill="#930b0b" font-weight="bold" font-size="9.2">0</text>
<text x="804.17" y="517.2" fill="#930b0b" font-weight="bold" font-size="9.2">0</text>
<text x="811.37" y="517.2" fill="#930b0b" font-weight="bold" font-size="9.2">0</text>
<text x="818.57" y="517.2" fill="#930b0b" font-weight="bold" font-size="9.2">0</text>
<text x="825.77" y="517.2" fill="#930b0b" font-weight="bold" font-size="9.2">0</text>
<text x="832.97" y="517.2" fill="#930b0b" font-weight="bold" font-size="9.2">0</text>
<text x="840.17" y="517.2" fill="#930b0b" font-weight="bold" font-size="9.2">0</text>
<text x="847.37" y="517.2" fill="#930b0b" font-weight="bold" font-size="9.2">0</text>
<text x="854.57" y="517.2" fill="#930b0b" font-weight="bold" font-size="9.2">0</text>
<text x="861.77" y="517.2" fill="#930b0b" font-weight="bold" font-size="9.2">0</text></g>
      <!-- vertical dashed lines -->
      <line x1="156.2" y1="450" x2="156.2" y2="579" stroke="#f0f0f0" stroke-width="1.2" stroke-dasharray="3.2 2.8"/>
      <line x1="847.5" y1="53" x2="847.5" y2="315" stroke="#f0f0f0" stroke-width="1.2" stroke-dasharray="3.2 2.8"/>
      <line x1="847.5" y1="450" x2="847.5" y2="579" stroke="#f0f0f0" stroke-width="1.2" stroke-dasharray="3.2 2.8"/>
      <!-- time axis -->
      <rect x="4" y="578.8" width="862" height="1" fill="#d8d8d8"/>
      <g class="clab" font-size="11.2" fill="#f2f2f2">
<line x1="5.0" y1="579" x2="5.0" y2="583" stroke="#ddd" stroke-width="1"/>
<text x="4.3" y="593">25 Jul 2024</text>
<line x1="91.4" y1="579" x2="91.4" y2="583" stroke="#ddd" stroke-width="1"/>
<text x="90.7" y="593">25 Jul 21:45</text>
<line x1="177.8" y1="579" x2="177.8" y2="583" stroke="#ddd" stroke-width="1"/>
<text x="177.1" y="593">26 Jul 00:45</text>
<line x1="264.2" y1="579" x2="264.2" y2="583" stroke="#ddd" stroke-width="1"/>
<text x="263.5" y="593">26 Jul 03:45</text>
<line x1="350.6" y1="579" x2="350.6" y2="583" stroke="#ddd" stroke-width="1"/>
<text x="349.9" y="593">26 Jul 06:45</text>
<line x1="437.0" y1="579" x2="437.0" y2="583" stroke="#ddd" stroke-width="1"/>
<text x="436.3" y="593">26 Jul 09:45</text>
<line x1="523.4" y1="579" x2="523.4" y2="583" stroke="#ddd" stroke-width="1"/>
<text x="522.7" y="593">26 Jul 12:45</text>
<line x1="609.8" y1="579" x2="609.8" y2="583" stroke="#ddd" stroke-width="1"/>
<text x="609.1" y="593">26 Jul 15:45</text>
<line x1="696.2" y1="579" x2="696.2" y2="583" stroke="#ddd" stroke-width="1"/>
<text x="695.5" y="593">26 Jul 18:45</text>
<line x1="782.6" y1="579" x2="782.6" y2="583" stroke="#ddd" stroke-width="1"/>
<text x="781.9" y="593">26 Jul 21:45</text>
      </g>
      <rect x="0" y="50" width="3.5" height="552" fill="#000"/>
      <rect x="0" y="50" width="1.2" height="552" fill="#b4b4b4"/>
      <rect x="1" y="50" width="1.3" height="552" fill="#5a5a5a"/>
      <rect x="3.700" y="52.2" width="0.95" height="548" fill="#e6e6e6"/>
      <rect x="3.700" y="52.1" width="862" height="0.9" fill="#e6e6e6"/>
      <rect x="0" y="600.1" width="866" height="1.9" fill="#6a6a6a"/>
    </svg>
  </div>
  <div id="info">
    <div class="hd" style="top:9px">TRADE INFORMATION</div>
<div class="il" style="top:25px">Super Trend Indicator:</div><div class="iv" style="top:25px">true</div>
<div class="il" style="top:43px">Binary Code Indicator:</div><div class="iv" style="top:43px">true</div>
<div class="il" style="top:61px">Step MA RSI Indicator:</div><div class="iv" style="top:61px">true</div>
<div class="il" style="top:79px">Tot IndicatorAlign:</div><div class="iv" style="top:79px">2</div>
<div class="il" style="top:97px">Buy Lots Size:</div><div class="iv" style="top:97px">0</div>
<div class="il" style="top:115px">Sell Lots Size:</div><div class="iv" style="top:115px">0.01</div>
<div class="il" style="top:133px">No of Buy Trades:</div><div class="iv" style="top:133px">0</div>
<div class="il" style="top:151px">No of Sell Trades:</div><div class="iv" style="top:151px">1</div>
<div class="il" style="top:169px">Buy Floating Profit:</div><div class="iv" style="top:169px">0</div>
<div class="il" style="top:187px">Sell Floating Profit:</div><div class="iv" style="top:187px">4.65</div>
<div class="il" style="top:205px">Running Day Profit/Loss:</div><div class="iv" style="top:205px">4.65</div>
    <div class="hd" style="top:234px">TRADE DASHBOARD</div>
  </div>
  <!-- arrows drawn over info panel -->
  <svg class="abs" style="left:0;top:0" width="240" height="320" viewBox="0 0 240 320">
    <path d="M62 87 V100 M57 95 L62 100 L67 95 M56.5 95 H67.5" stroke="#e01010" stroke-width="1.4" fill="none"/>
    <path d="M221 165 V154 M216.5 158.5 L221 154 L225.5 158.5" stroke="#22e022" stroke-width="1.4" fill="none"/>
  </svg>

  <div id="ctabs">
    <div class="abs" style="left:0;top:-0.600px;width:866px;height:1.300px;background:#1a1a1a"></div>
    <span style="left:18px">EURUSD,H1</span>
    <div class="abs" style="left:100px;top:3px;width:1px;height:17px;background:#8a8a8a"></div>
    <span style="left:113px">EURUSD,M1</span>
    <div class="abs" style="left:196px;top:0;width:152px;height:22px;background:#fff;border:1.5px solid #1a1a1a;border-top:none"></div>
    <span style="left:210px;color:#222">EURUSD,M15 (visual)</span>
  </div>

  <div id="tester">
    <div class="abs" style="left:4px;top:0.500px;width:12px;height:18px;font-size:17px;line-height:18px;color:#111">&#215;</div>
    <div class="abs" style="left:3px;top:19px;width:14.500px;height:276px;background:linear-gradient(90deg,#bcd0ea,#a0bde0 60%,#9ebbdf)"></div>
    <div class="abs" style="left:2px;top:257px;width:16px;height:36px"><div style="position:absolute;left:-11px;top:10px;width:38px;height:16px;transform:rotate(-90deg);font-size:12.6px;line-height:16px;color:#111;text-align:center">Tester</div></div>
    <div id="tpanel"></div>
    <div class="box" style="left:27px;top:14px;width:135px;height:21px;background:#e1e1e1">Expert Advisor<svg class="abs" style="right:2.500px;top:6.500px" width="11" height="8" viewBox="0 0 11 8"><path d="M1 1.5 L5.5 6 L10 1.5" stroke="#444" stroke-width="1.1" fill="none"/></svg></div>
    <div class="box" style="left:170px;top:14px;width:700px;height:21px;background:#f0f0f0;border-color:#7a7a7a">wuchua.ex4</div>
    <div class="lbl" style="left:62px;top:49px;width:100px;text-align:right">Symbol:</div>
    <div class="box" style="left:170px;top:45px;width:700px;height:21px;background:#e1e1e1;border-color:#c8c8c8">EURUSD, Euro vs US Dollar</div>
    <div class="lbl" style="left:62px;top:80px;width:100px;text-align:right">Model:</div>
    <div class="box" style="left:170px;top:75.500px;width:700px;height:21px;background:#e1e1e1;border-color:#c8c8c8">Every tick (the most precise method based on all available least timeframes to generate each tick)</div>
    <div class="lbl" style="left:49.500px;top:115px;width:100px;text-align:right">Use date</div>
    <div class="chk" style="left:153.200px;top:111.300px"><svg width="14" height="14" viewBox="0 0 14 14"><path d="M3 7 L5.7 10 L11 3.5" stroke="#111" stroke-width="2" fill="none"/></svg></div>
    <div class="lbl" style="left:49.500px;top:145px;width:100px;text-align:right">Visual mode</div>
    <div class="chk" style="left:153.200px;top:142px"><svg width="14" height="14" viewBox="0 0 14 14"><path d="M3 7 L5.7 10 L11 3.5" stroke="#111" stroke-width="2" fill="none"/></svg></div>
    <div class="lbl" style="left:205px;top:111px;width:100px;text-align:right">From:</div>
    <div class="box" style="left:312px;top:106px;width:136px;height:22px;background:#fff;border-color:#7a7a7a;padding-left:2px;letter-spacing:-0.4px">2024.07.29<svg class="abs" style="left:105px;top:3px" width="26" height="15" viewBox="0 0 26 15"><rect x="0.5" y="0.5" width="11.5" height="13" rx="1.8" fill="#f2f4f9" stroke="#8d9199"/><path d="M4.5 3.500 V12 M8.2 3.500 V12 M2 6 H11 M2 9.300 H11" stroke="#b9bdc9" stroke-width="1" fill="none"/><path d="M15 4.800 h8 l-4 4.400 z" fill="#3f3f3f"/></svg></div>
    <div class="lbl" style="left:490.500px;top:111px;width:100px;text-align:right">To:</div>
    <div class="box" style="left:599px;top:106px;width:136px;height:22px;background:#fff;border-color:#7a7a7a;padding-left:2px;letter-spacing:-0.4px">2024.08.27<svg class="abs" style="left:105px;top:3px" width="26" height="15" viewBox="0 0 26 15"><rect x="0.5" y="0.5" width="11.5" height="13" rx="1.8" fill="#f2f4f9" stroke="#8d9199"/><path d="M4.5 3.500 V12 M8.2 3.500 V12 M2 6 H11 M2 9.300 H11" stroke="#b9bdc9" stroke-width="1" fill="none"/><path d="M15 4.800 h8 l-4 4.400 z" fill="#3f3f3f"/></svg></div>
    <div class="box" style="left:599px;top:136.500px;width:136px;height:22px;background:#fff;border-color:#7a7a7a;padding-left:2px;letter-spacing:-0.4px">2024.09.13<svg class="abs" style="left:105px;top:3px" width="26" height="15" viewBox="0 0 26 15"><rect x="0.5" y="0.5" width="11.5" height="13" rx="1.8" fill="#f2f4f9" stroke="#8d9199"/><path d="M4.5 3.500 V12 M8.2 3.500 V12 M2 6 H11 M2 9.300 H11" stroke="#b9bdc9" stroke-width="1" fill="none"/><path d="M15 4.800 h8 l-4 4.400 z" fill="#3f3f3f"/></svg></div>
    <!-- slider -->
    <div class="abs" style="left:184px;top:143.500px;width:184px;height:13.500px;background:#fff;border:1px solid #b5b5b5"></div>
    <div class="abs" style="left:360px;top:139px;width:12px;height:23px;background:#ececec;border:1px solid #a0a0a0"></div>
    <div class="btn" style="left:388px;top:136px;width:26px;height:26px;line-height:22px;letter-spacing:2px;padding-left:2px">||</div>
    <div class="btn" style="left:422px;top:136px;width:169px;height:26px;line-height:24px">Skip to</div>
    <!-- progress -->
    <div class="abs" style="left:27px;top:238.500px;width:845px;height:22px;background:#e6e6e6;border-top:1px solid #c8c8c8;border-bottom:1px solid #c8c8c8"></div>
    <div class="abs" style="left:27px;top:239px;width:496px;height:21px;background:linear-gradient(90deg,#09b028 0,#09b028 27%,#2cc04a 31.500%,#6bdc78 34.800%,#6bdc78 37.500%,#2cc04a 41%,#09b028 46%,#09b028 100%)"></div>
    <div id="btabs">
      <div class="abs" style="left:18px;top:0;width:848px;height:2px;background:#222"></div>
      <div class="abs" style="left:21px;top:0;width:70px;height:23px;background:#fff;border:1.5px solid #1a1a1a;border-top:none"></div><div class="abs" style="left:22.500px;top:-2px;width:67px;height:5px;background:#fff"></div>
      <span style="left:32px;color:#111">Settings</span>
      <span style="left:102px">Results</span>
      <span style="left:166px">Graph</span>
      <span style="left:225px">Report</span>
      <span style="left:287px">Journal</span>
      <div class="abs" style="left:155px;top:6px;width:1px;height:16px;background:#8a8a8a"></div>
      <div class="abs" style="left:214px;top:6px;width:1px;height:16px;background:#8a8a8a"></div>
      <div class="abs" style="left:277px;top:6px;width:1px;height:16px;background:#8a8a8a"></div>
      <div class="abs" style="left:341px;top:6px;width:1px;height:16px;background:#8a8a8a"></div>
    </div>
    <div class="abs" style="left:0;top:298px;width:866px;height:1px;background:#fff"></div>
    <div class="abs" style="left:0;top:299.500px;width:866px;height:3px;background:#2a3a2a"></div>
  </div>
</div>

<div id="dlg">
  <div id="dtitle">
    <div class="abs" style="left:0;top:1px;width:861px;height:1px;background:#7a7a7a"></div>
    <div class="t">wuchua</div>
    <div class="abs" style="left:779px;top:8px;font-size:13px;line-height:16px;color:#111">?</div>
    <svg class="abs" style="left:828px;top:11px" width="13" height="13" viewBox="0 0 13 13"><path d="M1 1 L12 12 M12 1 L1 12" stroke="#111" stroke-width="1.1"/></svg>
  </div>
  <div id="pane"></div>
  <div class="dtab" style="left:10px;top:44px;width:50px;height:19px;padding-top:2px">Testing</div>
  <div class="dtab" style="left:59px;top:41px;width:46px;height:22px;padding-top:3px;background:#fff">Inputs</div>
  <div class="dtab" style="left:104px;top:44px;width:74px;height:19px;padding-top:2px">Optimization</div>
  <div id="list">
    <div id="lhead">
      <span style="left:6px">Variable</span>
      <span style="left:267px;width:130.400px;text-align:right">Value</span>
      <span style="left:402px;width:129.400px;text-align:right">Start</span>
      <span style="left:535px;width:130.400px;text-align:right">Step</span>
      <span style="left:670px;width:131.400px;text-align:right">Stop</span>
      <i style="left:267px"></i><i style="left:402px"></i><i style="left:535px"></i><i style="left:670px"></i><i style="left:806px"></i>
    </div>
    <div id="lbody">
<div class="r g"><i class="cb dis"></i><span class="c0"><b class="q">=============================</b></span><span class="cs"><b class="q2">=============</b>EXPERT ADVISOR SETTINGS<b class="q2">=============</b></span></div>
<div class="r"><i class="cb"></i><span class="c0">Fixed Lots</span><span class="c1 n">0.01</span><span class="c2 n">0.01</span><span class="c3 n">0.0</span><span class="c4 n">0.0</span></div>
<div class="r g"><i class="cb"></i><span class="c0">SL in Points</span><span class="c1 n">5.0</span><span class="c2 n">0.0</span><span class="c3 n">0.0</span><span class="c4 n">0.0</span></div>
<div class="r"><i class="cb"></i><span class="c0">TP in Points</span><span class="c1 n">5.0</span><span class="c2 n">0.0</span><span class="c3 n">0.0</span><span class="c4 n">0.0</span></div>
<div class="r g"><i class="cb"></i><span class="c0">Maximum Trades</span><span class="c1 n">1</span><span class="c2 n">1</span><span class="c3 n">0</span><span class="c4 n">0</span></div>
<div class="r"><i class="cb"></i><span class="c0">Max Spread(0 is off)</span><span class="c1 n">10</span><span class="c2 n">10</span><span class="c3 n">0</span><span class="c4 n">0</span></div>
<div class="r g"><i class="cb"></i><span class="c0">Trade Direction</span><span class="c1">Both Direction</span><span class="c2">Buy</span><span class="c3"></span><span class="c4">Buy</span></div>
<div class="r"><i class="cb"></i><span class="c0">Close Trade on Opposite</span><span class="c1">true</span><span class="c2">false</span><span class="c3"></span><span class="c4">true</span></div>
<div class="r g"><i class="cb"></i><span class="c0">Use Trail SL</span><span class="c1">false</span><span class="c2">false</span><span class="c3"></span><span class="c4">true</span></div>
<div class="r"><i class="cb"></i><span class="c0">Trailing Points</span><span class="c1 n">50.0</span><span class="c2 n">50.0</span><span class="c3 n">0.0</span><span class="c4 n">0.0</span></div>
<div class="r g"><i class="cb"></i><span class="c0">Trail Starting Points</span><span class="c1 n">10.0</span><span class="c2 n">10.0</span><span class="c3 n">0.0</span><span class="c4 n">0.0</span></div>
<div class="r"><i class="cb dis"></i><span class="c0">Start Time</span><span class="cs">00:00</span></div>
<div class="r g"><i class="cb dis"></i><span class="c0">Stop Time</span><span class="cs">23:59</span></div>
<div class="r"><i class="cb"></i><span class="c0">Open A trade Per Direction</span><span class="c1">true</span><span class="c2">false</span><span class="c3"></span><span class="c4">true</span></div>
<div class="r g"><i class="cb"></i><span class="c0">How Many Indicator to Use</span><span class="c1 n">2</span><span class="c2 n">2</span><span class="c3 n">0</span><span class="c4 n">0</span></div>
<div class="r"><i class="cb"></i><span class="c0">Open Trade at Candle Close</span><span class="c1">true</span><span class="c2">false</span><span class="c3"></span><span class="c4">true</span></div>
<div class="r g"><i class="cb"></i><span class="c0">Allow Screenshots after Trade</span><span class="c1">true</span><span class="c2">false</span><span class="c3"></span><span class="c4">true</span></div>
<div class="r"><i class="cb dis"></i><span class="c0"><b class="q">=============================</b></span><span class="cs"><b class="q2">=============</b>BINARY CODE INDICATOR SETTINGS<b class="q2">=============</b></span></div>
<div class="r g"><i class="cb"></i><span class="c0">Use Binary Code Indocator</span><span class="c1">true</span><span class="c2">false</span><span class="c3"></span><span class="c4">true</span></div>
<div class="r"><i class="cb"></i><span class="c0">Signal Type for Binary Indicator</span><span class="c1">Only Current color as ...</span><span class="c2">Color Change as Sig...</span><span class="c3"></span><span class="c4">Color Change as Signal</span></div>
<div class="r g"><i class="cb dis"></i><span class="c0">Indicator 1 Name as Saved</span><span class="cs">Binary Code Indicator</span></div>
<div class="r"><i class="cb"></i><span class="c0">Binary_Code_Period</span><span class="c1 n">5</span><span class="c2 n">5</span><span class="c3 n">0</span><span class="c4 n">0</span></div>
<div class="r g"><i class="cb"></i><span class="c0">Need_Arrows</span><span class="c1">true</span><span class="c2">false</span><span class="c3"></span><span class="c4">true</span></div>
<div class="r"><i class="cb dis"></i><span class="c0">Bull_Arrow</span><span class="cs"><b class="sw" style="background:#00ff00"></b>Lime</span></div>
<div class="r g"><i class="cb dis"></i><span class="c0">Bear_Arrow</span><span class="cs"><b class="sw" style="background:#ff0000"></b>Red</span></div>
<div class="r"><i class="cb"></i><span class="c0">Need_Alert</span><span class="c1">false</span><span class="c2">false</span><span class="c3"></span><span class="c4">true</span></div>
<div class="r g"><i class="cb"></i><span class="c0">Shift</span><span class="c1">false</span><span class="c2">false</span><span class="c3"></span><span class="c4">true</span></div>
<div class="r"><i class="cb dis"></i><span class="c0"><b class="q">=============================</b></span><span class="cs"><b class="q2">=============</b>STEP MA OF RSI INDICATOR SETTINGS<b class="q2">=============</b></span></div>
<div class="r g"><i class="cb"></i><span class="c0">Use Step Ma RSI Indicator</span><span class="c1">true</span><span class="c2">false</span><span class="c3"></span><span class="c4">true</span></div>
<div class="r"><i class="cb dis"></i><span class="c0">Indicator Name 2 as Saved</span><span class="cs">StepMA of rsi adaptive ema 2.9</span></div>
<div class="r g"><i class="cb"></i><span class="c0">Signal Type For Step Ma RSI Indicator</span><span class="c1">Only Current color as ...</span><span class="c2">Color Change as Sig...</span><span class="c3"></span><span class="c4">Color Change as Signal</span></div>
<div class="r"><i class="cb"></i><span class="c0">Timeframe to Use</span><span class="c1">current</span><span class="c2">current</span><span class="c3"></span><span class="c4">current</span></div>
<div class="r g"><i class="cb"></i><span class="c0">Rsi Calculation Method</span><span class="c1">RSI</span><span class="c2">Cuttlers RSI</span><span class="c3"></span><span class="c4">Cuttlers RSI</span></div>
<div class="r"><span class="c1"></span><span class="c2"></span><span class="c3"></span><span class="c4"></span></div>
    </div>
    <!-- scrollbar -->
    <div class="abs" style="left:808px;top:0;width:19px;height:768px;background:#f0f0f0"></div>
    <div class="abs" style="left:808px;top:20px;width:17px;height:471px;background:#cdcdcd"></div>
    <svg class="abs" style="left:811px;top:6px" width="11" height="8" viewBox="0 0 11 8"><path d="M1.300 6.700 L5.500 2.300 L9.700 6.700" stroke="#4a4a4a" stroke-width="1.800" fill="none"/></svg>
    <svg class="abs" style="left:811px;top:754px" width="11" height="8" viewBox="0 0 11 8"><path d="M1.300 1.500 L5.500 5.900 L9.700 1.500" stroke="#4a4a4a" stroke-width="1.800" fill="none"/></svg>
  </div>
  <svg class="abs" style="left:853px;top:917px" width="8" height="8" viewBox="0 0 8 8"><path d="M5 1 h1.600 v1.600 h-1.600z M5 4.400 h1.600 v1.600 h-1.600z M1.600 4.400 h1.600 v1.600 h-1.600z" fill="#b4b4b4"/></svg>
  <div class="btn" style="left:587px;top:851.500px;width:124px;height:23.500px;line-height:23px">Load</div>
  <div class="btn" style="left:722px;top:851.500px;width:124px;height:23.500px;line-height:23px">Save</div>
  <div class="btn" style="left:570px;top:893px;width:88px;height:23px;line-height:20.500px;border:2px solid #0078d7">OK</div>
  <div class="btn" style="left:667px;top:893px;width:88px;height:23px;line-height:22.500px">Cancel</div>
  <div class="btn" style="left:764px;top:893px;width:88px;height:23px;line-height:22.500px">Reset</div>
</div>
<div class="abs" style="left:864px;top:926px;width:864px;height:2px;background:#26392b"></div>
</body>
</html>
